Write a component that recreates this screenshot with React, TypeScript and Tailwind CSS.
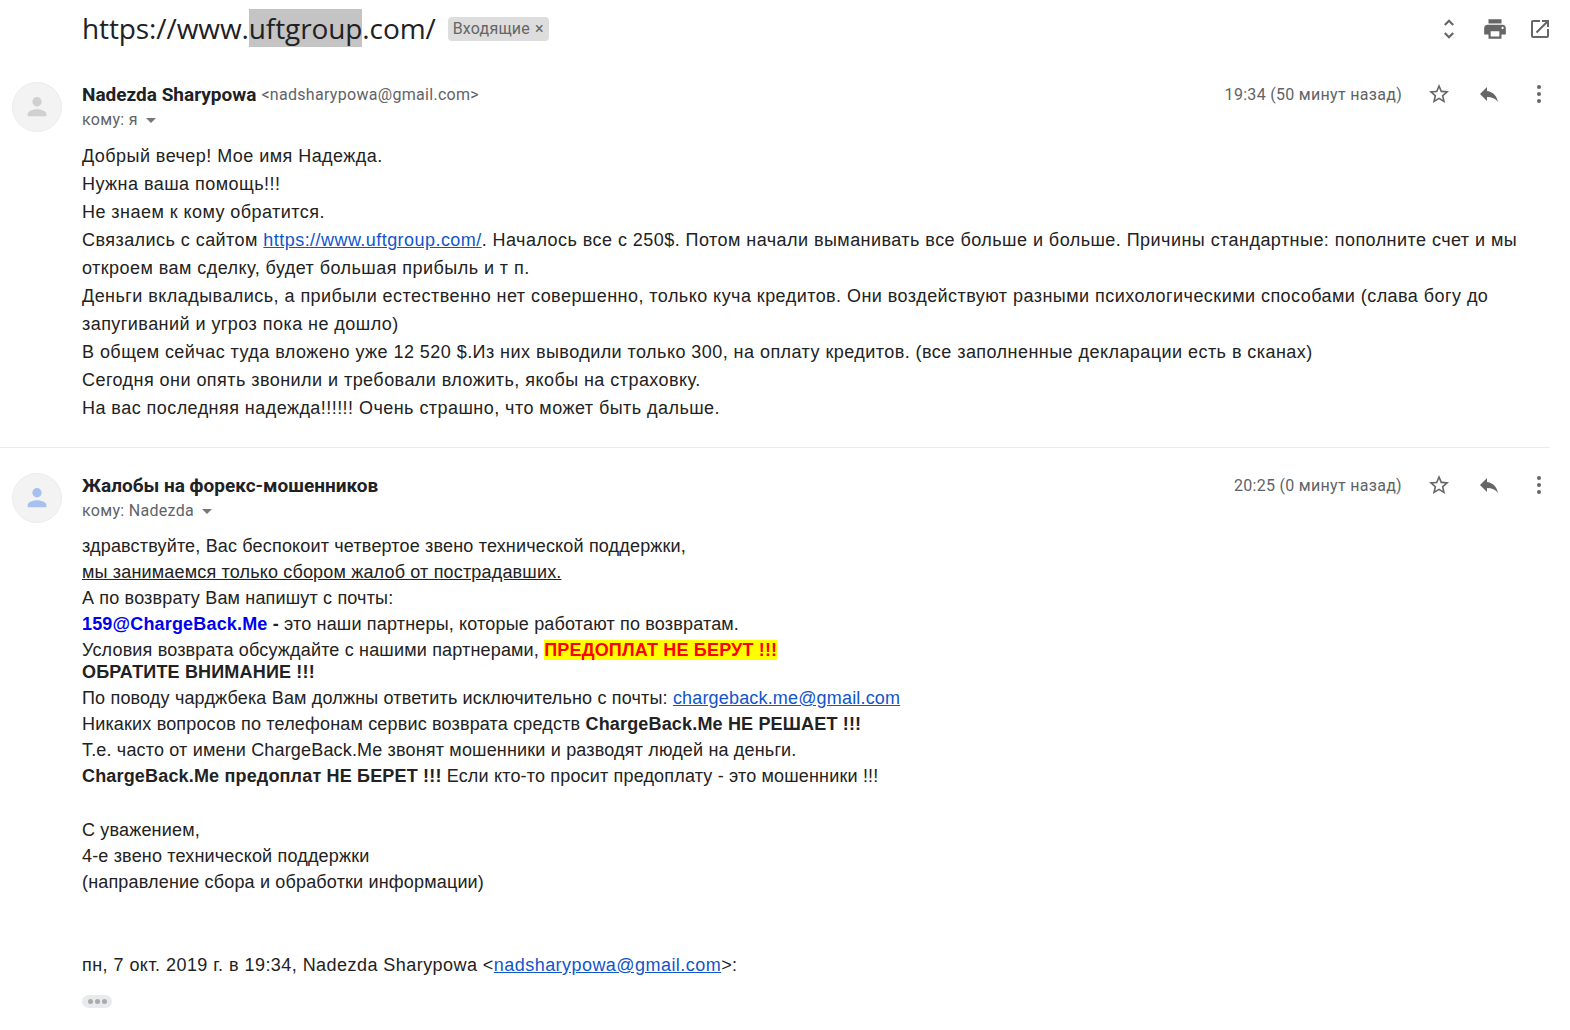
import type { ReactNode } from 'react'

const SANS = "font-['Liberation_Sans','Noto_Sans_CJK_SC',sans-serif]"
const ROBOTO = "font-['Roboto','Liberation_Sans',sans-serif]"

function IconButton({ children }: { children: ReactNode }) {
  return <span className="flex w-[24px] h-[24px] items-center justify-center text-[#666666]">{children}</span>
}

function StarIcon() {
  return (
    <svg viewBox="0 0 24 24" className="w-[26px] h-[26px] fill-current">
      <path d="M22 9.24l-7.19-.62L12 2 9.19 8.63 2 9.24l5.46 4.73L5.82 21 12 17.27 18.18 21l-1.63-7.03L22 9.24zM12 15.4l-3.76 2.27 1-4.28-3.32-2.88 4.38-.38L12 6.1l1.71 4.04 4.38.38-3.32 2.88 1 4.28L12 15.4z" />
    </svg>
  )
}

function ReplyIcon() {
  return (
    <svg viewBox="0 0 24 24" className="w-[26px] h-[26px] fill-current">
      <path d="M10 9V5l-7 7 7 7v-4.1c5 0 8.5 1.6 11 5.1-1-5-4-10-11-11z" />
    </svg>
  )
}

function MoreIcon() {
  return (
    <svg viewBox="0 0 24 24" className="w-[24px] h-[24px] fill-current">
      <circle cx="12" cy="5" r="2" />
      <circle cx="12" cy="12" r="2" />
      <circle cx="12" cy="19" r="2" />
    </svg>
  )
}

function Avatar({ color }: { color: string }) {
  return (
    <div className="w-[50px] h-[50px] shrink-0 rounded-full bg-[#f3f3f3] border border-[#ececec] flex items-center justify-center">
      <svg viewBox="0 0 24 24" className="w-[28px] h-[28px]" fill={color}>
        <circle cx="12" cy="7.5" r="4" />
        <path d="M4 20v-2c0-2.6 5.3-4 8-4s8 1.4 8 4v2z" />
      </svg>
    </div>
  )
}

function MessageHeader({ name, email, time, to, color }: { name: string; email?: string; time: string; to: string; color: string }) {
  return (
    <div className="flex">
      <div className="w-[82px] pl-[12px] shrink-0">
        <Avatar color={color} />
      </div>
      <div className="flex-1">
        <div className={`flex items-center h-[24px] ${ROBOTO}`}>
          <span className="pt-[2px] text-[19px] font-bold text-[#202124]">{name}</span>
          {email && <span className="ml-[5px] pt-[2px] text-[16px] text-[#5f6368] tracking-[0.3px]">{email}</span>}
          <span className="ml-auto pt-[2px] text-[16px] text-[#5f6368] tracking-[0.3px]">{time}</span>
          <div className="flex items-center ml-[25px] mr-[-1px] gap-[26px]">
            <IconButton><StarIcon /></IconButton>
            <IconButton><ReplyIcon /></IconButton>
            <IconButton><MoreIcon /></IconButton>
          </div>
        </div>
        <div className={`flex items-center mt-[2px] h-[24px] text-[16px] text-[#5f6368] tracking-[0.3px] ${ROBOTO}`}>
          {to}
          <span className="ml-[8px] w-0 h-0 border-x-[5px] border-x-transparent border-t-[5px] border-t-[#777777]" />
        </div>
      </div>
    </div>
  )
}

function Link({ children }: { children: ReactNode }) {
  return <span className="text-[#1155cc] underline">{children}</span>
}

export default function App() {
  return (
    <div className="w-[1570px] h-[1030px] overflow-hidden bg-white text-[#222222]">
      {/* тема письма */}
      <div className="flex items-center h-[58px] pl-[82px] pr-[18px]">
        <h1 className="mb-[2px] text-[28px] tracking-[-0.1px] font-normal text-[#202124] font-['Open_Sans','Liberation_Sans',sans-serif]">
          https://www.<span className="bg-[#c4c4c4]">uftgroup</span>.com/
        </h1>
        <span className={`ml-[12px] flex items-center h-[24px] px-[5px] rounded bg-[#dddddd] text-[16px] tracking-[0.2px] text-[#666666] ${ROBOTO}`}>
          Входящие
          <span className="ml-[5px] text-[16px]">×</span>
        </span>
        <div className="ml-auto flex items-center gap-[20px] text-[#666666]">
          <svg viewBox="0 0 24 24" className="w-[26px] h-[26px] fill-current">
            <path d="M12 5.83L15.17 9l1.41-1.41L12 3 7.41 7.59 8.83 9 12 5.83zm0 12.34L8.83 15l-1.41 1.41L12 21l4.59-4.59L15.17 15 12 18.17z" />
          </svg>
          <svg viewBox="0 0 24 24" className="w-[26px] h-[26px] fill-current">
            <path d="M19 8H5c-1.66 0-3 1.34-3 3v6h4v4h12v-4h4v-6c0-1.66-1.34-3-3-3zm-3 11H8v-5h8v5zm3-7c-.55 0-1-.45-1-1s.45-1 1-1 1 .45 1 1-.45 1-1 1zm-1-9H6v4h12V3z" />
          </svg>
          <svg viewBox="0 0 24 24" className="w-[24px] h-[24px] fill-current">
            <path d="M19 19H5V5h7V3H5c-1.11 0-2 .9-2 2v14c0 1.1.89 2 2 2h14c1.1 0 2-.9 2-2v-7h-2v7zM14 3v2h3.59l-9.83 9.83 1.41 1.41L19 6.41V10h2V3h-7z" />
          </svg>
        </div>
      </div>

      {/* первое письмо */}
      <div className="pt-[24px] border-b border-[#ececec] h-[390px] w-[1550px]">
        <MessageHeader name="Nadezda Sharypowa" email="<nadsharypowa@gmail.com>" time="19:34 (50 минут назад)" to="кому: я" color="#d0d0d0" />
        <div className={`pl-[82px] mt-[10px] text-[18px] leading-[28px] tracking-[0.45px] text-[#222222] ${SANS}`}>
          <p>Добрый вечер! Мое имя Надежда.</p>
          <p>Нужна ваша помощь!!!</p>
          <p>Не знаем к кому обратится.</p>
          <p>Связались с сайтом <Link>https://www.uftgroup.com/</Link>. Началось все с 250$. Потом начали выманивать все больше и больше. Причины стандартные: пополните счет и мы откроем вам сделку, будет большая прибыль и т п.</p>
          <p>Деньги вкладывались, а прибыли естественно нет совершенно, только куча кредитов. Они воздействуют разными психологическими способами (слава богу до запугиваний и угроз пока не дошло)</p>
          <p>В общем сейчас туда вложено уже 12 520 $.Из них выводили только 300, на оплату кредитов. (все заполненные декларации есть в сканах)</p>
          <p>Сегодня они опять звонили и требовали вложить, якобы на страховку.</p>
          <p>На вас последняя надежда!!!!!! Очень страшно, что может быть дальше.</p>
        </div>
      </div>

      {/* ответ */}
      <div className="pt-[25px] pr-[20px]">
        <MessageHeader name="Жалобы на форекс-мошенников" time="20:25 (0 минут назад)" to="кому: Nadezda" color="#a6c1ee" />
        <div className={`pl-[82px] mt-[10px] text-[18px] leading-[26px] tracking-[0.17px] text-[#222222] ${SANS}`}>
          <p>здравствуйте, Вас беспокоит четвертое звено технической поддержки,</p>
          <p className="underline">мы занимаемся только сбором жалоб от пострадавших.</p>
          <p>А по возврату Вам напишут с почты:</p>
          <p><b className="text-[#0000ee]">159@ChargeBack.Me</b> <b>-</b> это наши партнеры, которые работают по возвратам.</p>
          <p>Условия возврата обсуждайте с нашими партнерами, <b className="text-[#ff0000] bg-[#ffff00]">ПРЕДОПЛАТ НЕ БЕРУТ !!!</b></p>
          <p className="leading-[18px] pb-[4px]"><b>ОБРАТИТЕ ВНИМАНИЕ !!!</b></p>
          <p>По поводу чарджбека Вам должны ответить исключительно с почты: <Link>chargeback.me@gmail.com</Link></p>
          <p>Никаких вопросов по телефонам сервис возврата средств <b>ChargeBack.Me НЕ РЕШАЕТ !!!</b></p>
          <p>Т.е. часто от имени ChargeBack.Me звонят мошенники и разводят людей на деньги.</p>
          <p><b>ChargeBack.Me предоплат НЕ БЕРЕТ !!!</b> Если кто-то просит предоплату - это мошенники !!!</p>
          <p className="mt-[28px]">С уважением,</p>
          <p>4-е звено технической поддержки</p>
          <p>(направление сбора и обработки информации)</p>
          <p className="mt-[57px] tracking-[0.45px] text-[#222222]">пн, 7 окт. 2019 г. в 19:34, Nadezda Sharypowa &lt;<Link>nadsharypowa@gmail.com</Link>&gt;:</p>
          <div className="mt-[17px] w-[30px] h-[13px] rounded-full bg-[#e8eaed] flex items-center justify-center gap-[2px]">
            <span className="w-[5px] h-[5px] rounded-full bg-[#aaaaaa]" />
            <span className="w-[5px] h-[5px] rounded-full bg-[#aaaaaa]" />
            <span className="w-[5px] h-[5px] rounded-full bg-[#aaaaaa]" />
          </div>
        </div>
      </div>
    </div>
  )
}
